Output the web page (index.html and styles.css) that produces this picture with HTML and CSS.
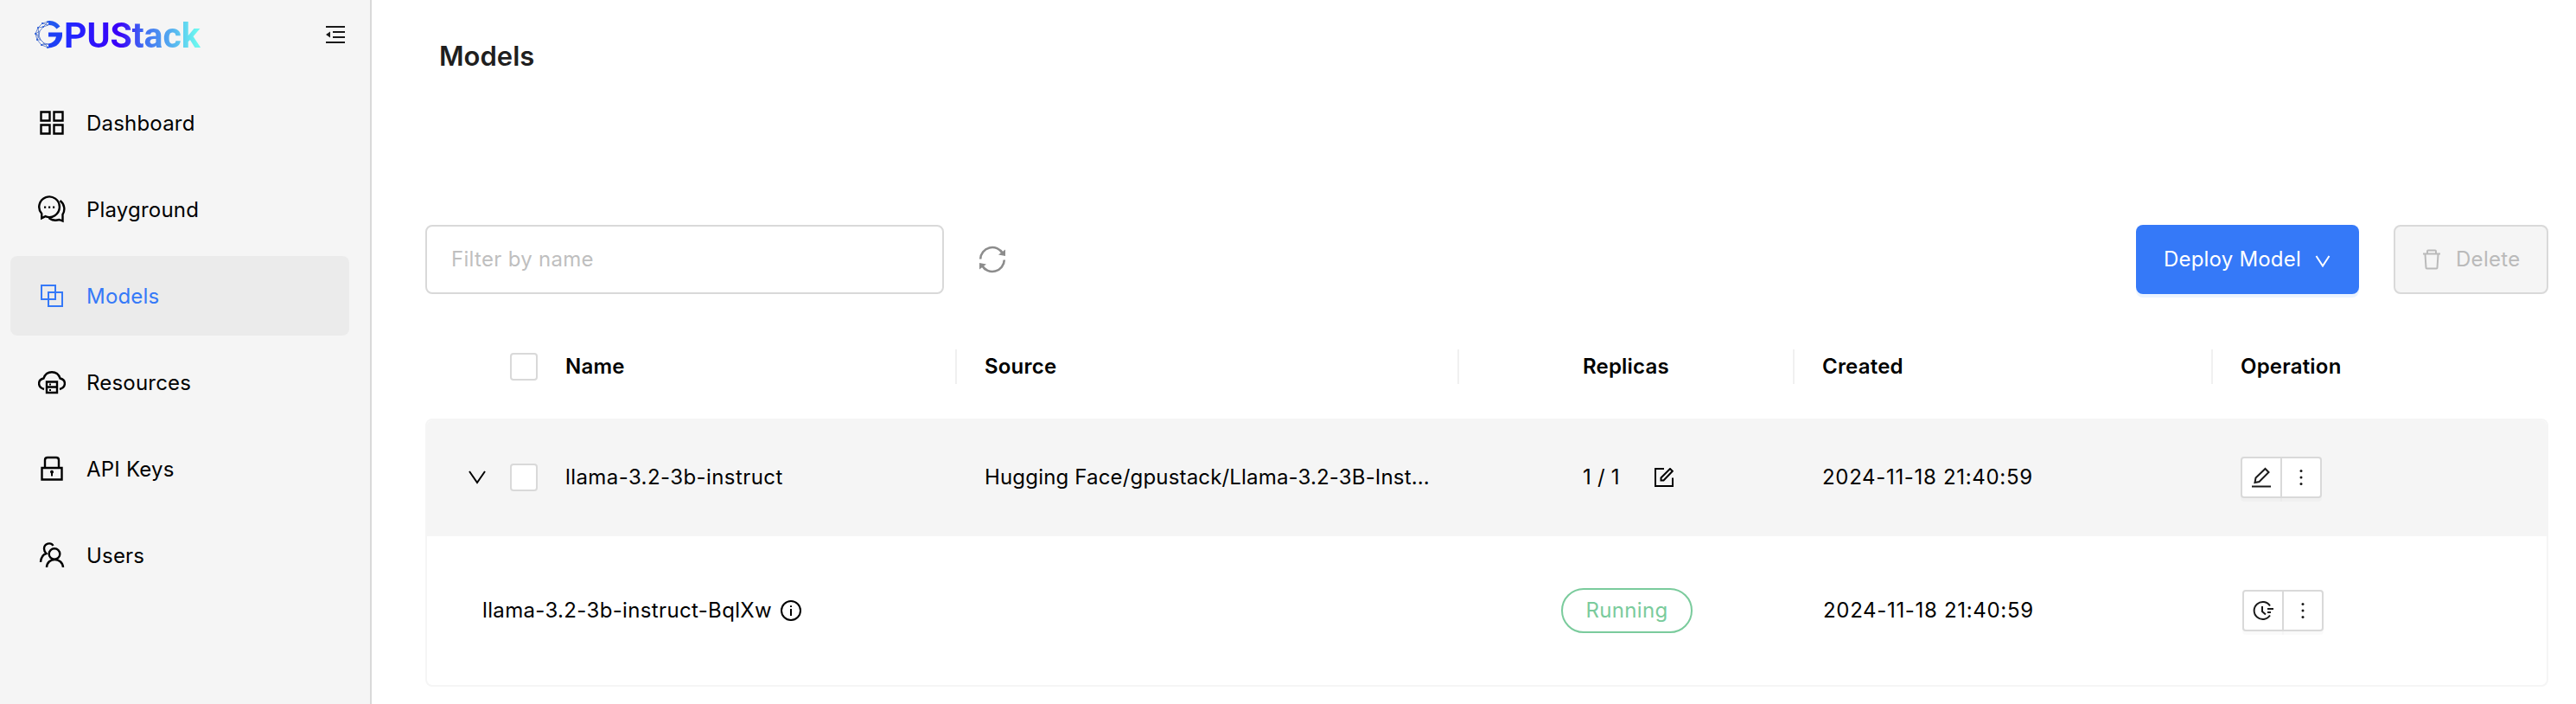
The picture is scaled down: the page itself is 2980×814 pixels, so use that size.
FILE: index.html
```html
<!DOCTYPE html>
<html lang="en">

<head>
    <meta charset="UTF-8">
    <meta name="viewport" content="width=device-width, initial-scale=1.0">
    <title>GPUStack</title>
    <link rel="stylesheet" href="styles.css">
</head>

<body>
    <aside class="sider">
        <div class="sider-top">
            <div class="logo">
                <svg class="logo-g" viewBox="0 0 32 32" fill="none">
                    <path d="M16 2.500A13.500 13.500 0 0 1 27.500 8" stroke="#2257f0" stroke-width="5" />
                    <path d="M16 13.500H32A16 16 0 0 1 16 31.500V26.500A10 10 0 0 0 25 18.500H16Z" fill="#1d3ff5" />
                    <path d="M16 1L9 3 4 8 1 15 3 22 8 28 16 31M16 5L10 7 6 12 5 17 7 22 11 26 16 27M16 1L10 7 4 8M9 3L16 5M4 8L5 17 1 15 6 12M1 15L7 22 3 22 5 17M8 28L11 26 7 22M16 31L11 26M8 28L16 27" stroke="#4a6fc8" stroke-width=".8" />
                    <g fill="#2257d8"><circle cx="9" cy="3" r="1" /><circle cx="4" cy="8" r="1" /><circle cx="1.200" cy="15" r="1.100" /><circle cx="3" cy="22" r="1" /><circle cx="8" cy="28" r="1" /><circle cx="10" cy="7" r="1" /><circle cx="15" cy="1.200" r="1" /><circle cx="15" cy="31" r="1" /></g>
                </svg>
                <span class="logo-text">PUStack</span>
            </div>
            <svg class="fold" viewBox="0 0 22 20"><path d="M0 0h22v2H0zM8 6h14v2H8zM8 12h14v2H8zM0 18h22v2H0zM5 6.500v7L0 10z" /></svg>
        </div>
        <ul class="menu">
            <li class="menu-item">
                <svg class="menu-icon" viewBox="0 0 32 32"><path d="M3.500 3.500h10v10h-10zM18.500 3.500h10v10h-10zM3.500 18.500h10v10h-10zM18.500 18.500h10v10h-10z" /></svg>
                <span>Dashboard</span>
            </li>
            <li class="menu-item">
                <svg class="menu-icon" viewBox="0 0 32 32"><path d="M4.200 26.300V21A11.800 11.800 0 1 1 8.500 24.100ZM25.500 6A12 12 0 0 1 28.500 22V29.500L24.500 28C20 29.300 15.500 28.500 12.500 26" /><path class="solid" d="M7 12.500h2.200v2.200H7zM12 12.500h2.200v2.200H12zM17 12.500h2.200v2.200H17z" /></svg>
                <span>Playground</span>
            </li>
            <li class="menu-item active">
                <svg class="menu-icon" viewBox="0 0 32 32"><path d="M4 4h16v16H4zM12 12h16v16H12z" /></svg>
                <span>Models</span>
            </li>
            <li class="menu-item">
                <svg class="menu-icon" viewBox="0 0 32 32"><path d="M7 24C-.8 22 -.8 13 6.500 11.500C9.500 1.800 22.500 1.800 25.500 11.500C32.800 13 32.800 22 25 24M10 15.500h12v12.500H10zM10 21.500h12" /><path class="solid" d="M13 17.500h2v2h-2zM13 24h2v2h-2z" /></svg>
                <span>Resources</span>
            </li>
            <li class="menu-item">
                <svg class="menu-icon" viewBox="0 0 32 32"><path d="M4.500 15h23v13.500h-23zM8 15V6Q8 3 11 3H21Q24 3 24 6V15" /><path class="solid" d="M14 20a2 2 0 1 1 3 1.500V24.500h-2V21.500z" /></svg>
                <span>API Keys</span>
            </li>
            <li class="menu-item">
                <svg class="menu-icon" viewBox="0 0 32 32"><circle cx="19" cy="14.500" r="6.300" /><path d="M10 30C10.500 18 28 18 29 30M17.500 5C15 .5 7 2 7 8.500Q7 11.500 9.500 14C6 15 3.500 18.500 3 24" /></svg>
                <span>Users</span>
            </li>
        </ul>
    </aside>

    <main class="content">
        <h1 class="title">Models</h1>

        <div class="toolbar">
            <input class="filter" type="text" placeholder="Filter by name">
            <svg class="refresh" viewBox="0 0 32 32"><path d="M2.200 15.500A13.800 13.800 0 0 1 28 9M29.800 16.500A13.800 13.800 0 0 1 4 23" /><path class="tip" d="M31 4.500V12L23 10.500zM1 27.500V20L9 21.500z" /></svg>
            <button class="btn btn-primary">
                <span>Deploy Model</span>
                <svg class="down" viewBox="0 0 18 14"><path d="M1.500 1L9 12.500 16.500 1" /></svg>
            </button>
            <button class="btn btn-delete" disabled>
                <svg class="trash" viewBox="0 0 20 24"><path d="M0 5.500h20M5 5V2.500Q5 1.500 6 1.500H14Q15 1.500 15 2.500V5M2.500 6L3.500 21.500Q3.500 22.500 4.500 22.500H15.500Q16.500 22.500 16.500 21.500L17.500 6" /></svg>
                <span>Delete</span>
            </button>
        </div>

        <div class="row table-head">
            <div class="prefix"><i class="checkbox"></i></div>
            <div class="cell">Name</div>
            <div class="cell">Source</div>
            <div class="cell replicas">Replicas</div>
            <div class="cell">Created</div>
            <div class="cell">Operation</div>
        </div>

        <div class="card">
            <div class="row model-row">
                <div class="prefix">
                    <svg class="expand" viewBox="0 0 20 16"><path d="M1 1L10 14 19 1" /></svg>
                    <i class="checkbox"></i>
                </div>
                <div class="cell model-name">llama-3.2-3b-instruct</div>
                <div class="cell source">Hugging Face/gpustack/Llama-3.2-3B-Inst...</div>
                <div class="cell replicas">
                    <span class="count">1 / 1</span>
                    <svg class="edit" viewBox="0 0 22 22"><path d="M11 1H1V21H21V11.500" /><path d="M7.500 14.500V11.500L18 1 20.800 3.800 10.500 14.500Z" /></svg>
                </div>
                <div class="cell date">2024-11-18 21:40:59</div>
                <div class="cell">
                    <div class="btn-group">
                        <button class="op"><svg viewBox="0 0 24 24"><path d="M1 22.500H23M4.500 18L5.500 12.500 16.500 2 20.500 6 9.500 17Z" /></svg></button>
                        <button class="op"><svg class="dots" viewBox="0 0 24 24"><circle cx="12" cy="4.500" r="1.500" /><circle cx="12" cy="12" r="1.500" /><circle cx="12" cy="19.500" r="1.500" /></svg></button>
                    </div>
                </div>
            </div>
            <div class="row instance-row">
                <div class="cell instance-name">
                    <span>llama-3.2-3b-instruct-BqlXw</span>
                    <svg class="info" viewBox="0 0 24 24"><circle cx="12" cy="12" r="11" /><path d="M12 10V18M12 6.200V8" /></svg>
                </div>
                <div class="cell"></div>
                <div class="cell status"><span class="tag">Running</span></div>
                <div class="cell date">2024-11-18 21:40:59</div>
                <div class="cell">
                    <div class="btn-group">
                        <button class="op"><svg viewBox="0 0 24 24"><path d="M20 6.500A10 10 0 1 0 20 17.500M11 7V13L15 16.500M17 10H24M17 14H21" /></svg></button>
                        <button class="op"><svg class="dots" viewBox="0 0 24 24"><circle cx="12" cy="4.500" r="1.500" /><circle cx="12" cy="12" r="1.500" /><circle cx="12" cy="19.500" r="1.500" /></svg></button>
                    </div>
                </div>
            </div>
        </div>
    </main>
</body>

</html>
```
FILE: styles.css
```css
* {
    box-sizing: border-box;
    padding: 0;
    margin: 0;
}

body {
    display: flex;
    height: 814px;
    overflow: hidden;
    background: #fff;
    color: #000;
    font-family: Inter, "Liberation Sans", sans-serif;
    font-size: 24px;
    line-height: 36px;
    letter-spacing: 0.2px;
}

svg {
    display: block;
    flex: none;
    fill: none;
    stroke: currentColor;
    stroke-width: 2;
}

/* sidebar */

.sider {
    flex: none;
    width: 430px;
    background: #f5f5f5;
    border-right: 2px solid #d9d9d9;
}

.sider-top {
    display: flex;
    justify-content: space-between;
    align-items: center;
    height: 80px;
    padding: 0 29px 0 40px;
}

.logo {
    display: flex;
    align-items: center;
}

.logo-g {
    width: 32px;
    height: 32px;
    stroke: none;
}

.logo-text {
    margin-left: 2px;
    padding-top: 2px;
    font-family: Roboto, sans-serif;
    font-size: 41px;
    font-weight: 700;
    line-height: 42px;
    letter-spacing: 0;
    background: linear-gradient(90deg, #1f2cff 0%, #3a00f8 40%, #3f6cf2 58%, #52a5f0 76%, #6cf6f0 97%);
    -webkit-background-clip: text;
    background-clip: text;
    color: transparent;
}

.fold {
    width: 22px;
    height: 20px;
    stroke: none;
    fill: #1a1a1a;
}

.menu {
    list-style: none;
    padding: 16px 24px 0 12px;
}

.menu-item {
    display: flex;
    align-items: center;
    height: 92px;
    margin-bottom: 8px;
    padding-left: 32px;
    border-radius: 8px;
}

.menu-item.active {
    background: #ebebeb;
    color: #3579f8;
}

.menu-item span {
    margin-left: 24px;
    padding-top: 2px;
}

.menu-icon {
    width: 32px;
    height: 32px;
}

.menu-item:not(.active) .menu-icon {
    stroke-width: 2.4;
}

.menu-icon .solid {
    fill: currentColor;
    stroke: none;
}

/* page */

.content {
    flex: 1;
    padding: 0 32px 0 62px;
}

.title {
    height: 260px;
    padding: 41px 0 0 16px;
    color: #1f1f1f;
    font-size: 31px;
    font-weight: 600;
    line-height: 48px;
    letter-spacing: 0;
}

.toolbar {
    display: flex;
    align-items: center;
    height: 80px;
}

.filter {
    width: 600px;
    height: 80px;
    padding: 0 28px 1px;
    border: 2px solid #d9d9d9;
    border-radius: 8px;
    outline: none;
    font: inherit;
    letter-spacing: 0.3px;
}

.filter::placeholder {
    color: #bfbfbf;
}

.refresh {
    width: 32px;
    height: 32px;
    margin: 0 auto 0 40px;
    color: #8c8c8c;
    stroke-width: 2.6;
}

.refresh .tip {
    fill: currentColor;
    stroke: none;
}

.btn {
    display: flex;
    align-items: center;
    height: 80px;
    border-radius: 8px;
    font: inherit;
    letter-spacing: 0.3px;
}

.btn-primary {
    width: 258px;
    padding-left: 32px;
    border: 0;
    background: #3579f8;
    color: #fff;
    box-shadow: 0 4px 0 #ebf4ff;
    letter-spacing: 0.2px;
}

.down {
    width: 18px;
    height: 14px;
    margin: 4px 0 0 16px;
}

.btn-delete {
    width: 179px;
    margin-left: 40px;
    padding-left: 32px;
    border: 2px solid #d9d9d9;
    background: #f5f5f5;
    color: #bababa;
}

.trash {
    width: 20px;
    height: 24px;
    margin-right: 18px;
}

/* table */

.row {
    display: grid;
    grid-template-columns: 128px 485px 581px 388px 484px 1fr;
    align-items: center;
}

.prefix {
    display: flex;
    align-items: center;
    justify-content: flex-end;
}

.checkbox {
    width: 32px;
    height: 32px;
    border: 2px solid #d9d9d9;
    border-radius: 4px;
    background: #fff;
}

.cell {
    display: flex;
    align-items: center;
    height: 40px;
    padding-left: 32px;
    white-space: nowrap;
}

.table-head {
    margin-top: 64px;
    height: 40px;
    padding-left: 2px;
    font-weight: 600;
}

.table-head .cell:not(:last-child) {
    border-right: 2px solid #f0f0f0;
}

.cell.replicas {
    padding-left: 143px;
}

.card {
    height: 310px;
    margin-top: 40px;
    border: 2px solid #f5f5f5;
    border-radius: 8px;
    overflow: hidden;
}

.model-row {
    height: 134px;
    padding-bottom: 2px;
    background: #f5f5f5;
}

.model-name {
    letter-spacing: 0.42px;
}

.source {
    letter-spacing: 0.17px;
}

.date {
    letter-spacing: 0.68px;
}

.expand {
    width: 20px;
    height: 16px;
    margin-right: 28px;
}

.edit {
    width: 22px;
    height: 22px;
    margin-left: 40px;
}

.btn-group {
    display: flex;
}

.op {
    display: flex;
    align-items: center;
    justify-content: center;
    width: 48px;
    height: 48px;
    border: 2px solid #d9d9d9;
    border-radius: 4px 0 0 4px;
    background: #fff;
    color: #1a1a1a;
    box-shadow: 0 4px 0 rgba(0, 0, 0, 0.02);
}

.op + .op {
    margin-left: -2px;
    border-radius: 0 4px 4px 0;
}

.op svg {
    width: 24px;
    height: 24px;
}

.op .dots {
    fill: currentColor;
    stroke: none;
}

.instance-row {
    grid-template-columns: 613px 581px 388px 486px 1fr;
    height: 172px;
}

.instance-row .date {
    padding-left: 33px;
}

.instance-name {
    padding-left: 64px;
    letter-spacing: 0.35px;
}

.info {
    width: 24px;
    height: 24px;
    margin-left: 10px;
}

.cell.status {
    padding-left: 118px;
}

.tag {
    width: 152px;
    height: 52px;
    border: 2px solid #7acb9c;
    border-radius: 26px;
    color: #7acb9c;
    line-height: 48px;
    text-align: center;
    letter-spacing: 0.3px;
}
```
